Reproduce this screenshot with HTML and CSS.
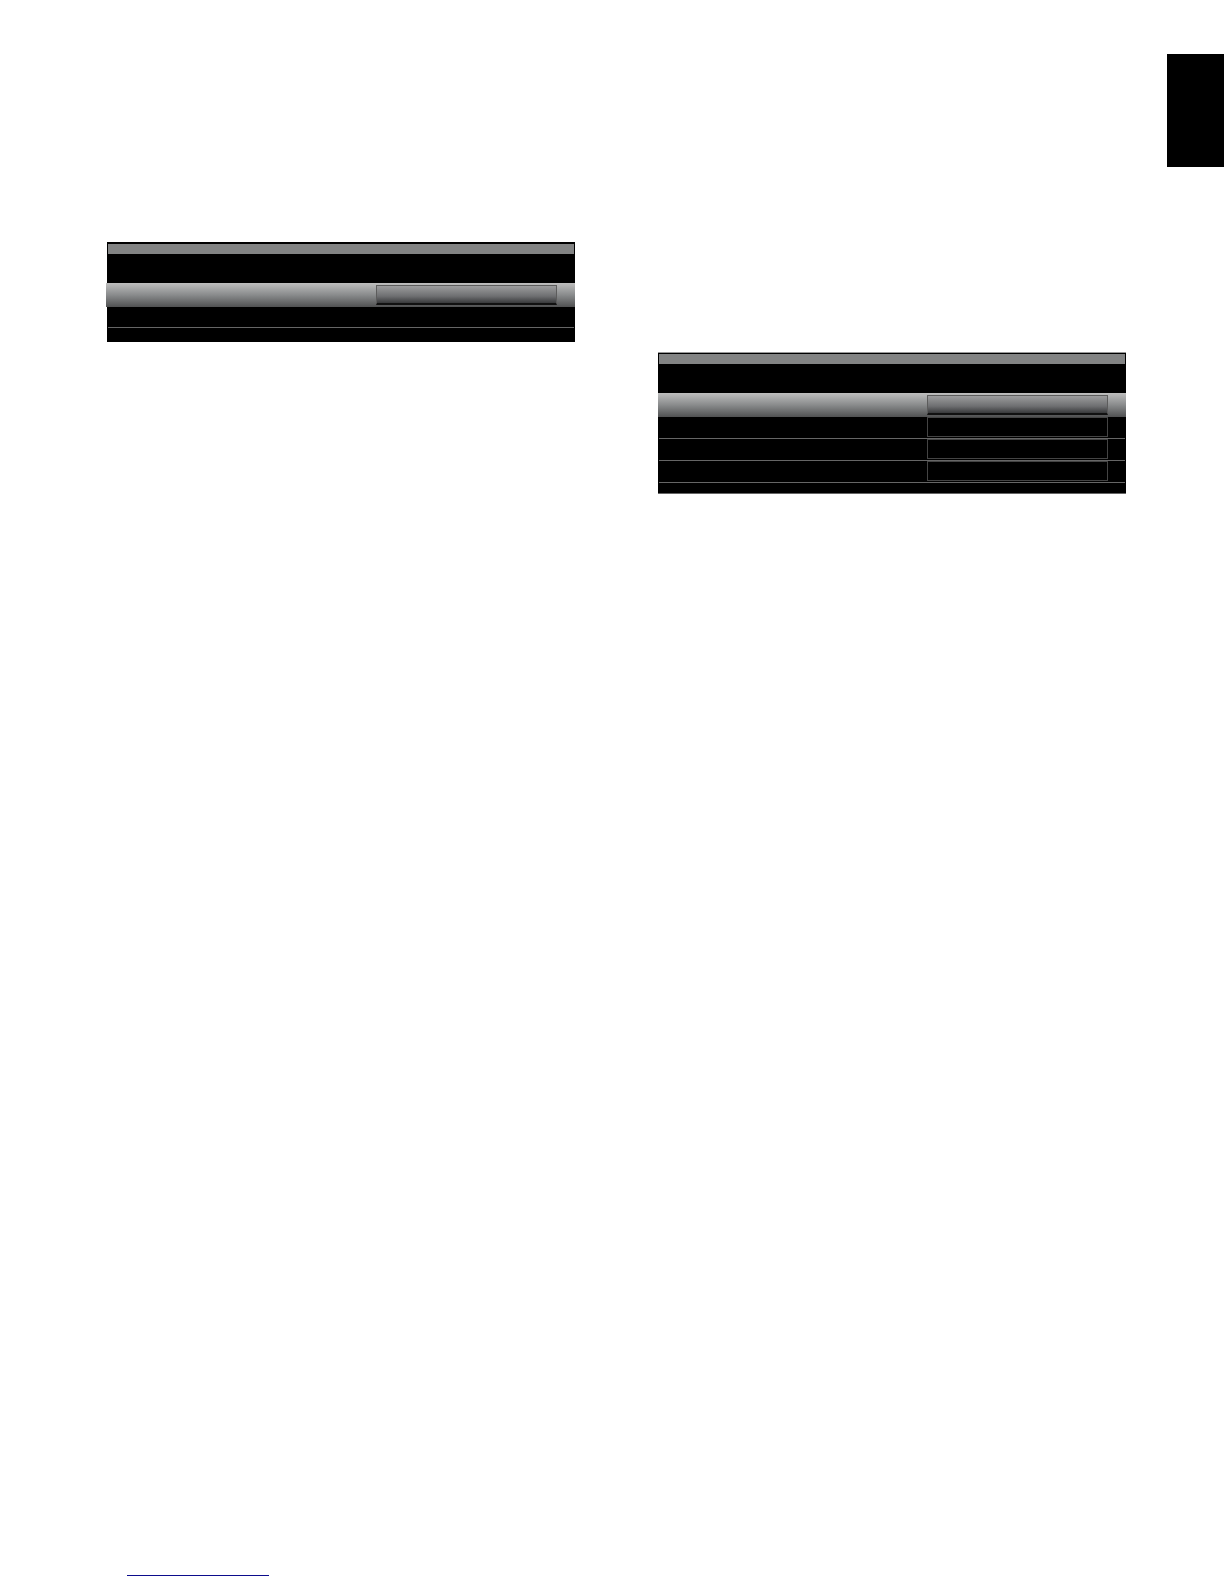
FILE: index.html
```
<!DOCTYPE html>
<html lang="en">
<head>
    <meta charset="UTF-8">
    <meta name="viewport" content="width=device-width, initial-scale=1.0">
    <title>Setup menus</title>
    <link rel="stylesheet" href="styles.css">
</head>
<body>
    <div class="top">
        <div class="tab"></div>
    </div>
    <div class="container">
        <div class="panel panel-left">
            <div class="title-bar"></div>
            <div class="heading"></div>
            <div class="row selected">
                <input class="field" type="text" aria-label="Value" readonly>
            </div>
            <div class="row"></div>
        </div>
        <div class="panel panel-right">
            <div class="title-bar"></div>
            <div class="heading"></div>
            <div class="row selected">
                <input class="field" type="text" aria-label="Value 1" readonly>
            </div>
            <div class="row">
                <input class="field" type="text" aria-label="Value 2" readonly>
            </div>
            <div class="row">
                <input class="field" type="text" aria-label="Value 3" readonly>
            </div>
            <div class="row">
                <input class="field" type="text" aria-label="Value 4" readonly>
            </div>
        </div>
    </div>
    <div class="footer">
        <a class="footer-link" href="#" aria-label="Contents"></a>
    </div>
</body>
</html>
```

FILE: styles.css
```
* {
    margin: 0;
    padding: 0;
    box-sizing: border-box;
}

body {
    display: flex;
    flex-direction: column;
    min-height: 100vh;
    background-color: #fff;
    font-family: "Liberation Sans", Arial, sans-serif;
}

.top {
    display: flex;
    justify-content: flex-end;
    padding-top: 54px;
}

.tab {
    width: 57px;
    height: 113px;
    background-color: #000;
}

.container {
    display: grid;
    grid-template-columns: 1fr 1fr;
    align-items: start;
    gap: 83px;
    padding: 75px 98px 0 107px;
}

.panel {
    padding-top: 1px;
    border-top: 1px solid #000;
    background-color: #000;
}

.panel-left {
    padding-bottom: 14px;
}

.panel-right {
    margin-top: 110px;
    padding-bottom: 10px;
    border-top-color: #999;
    border-bottom: 1px solid #666;
}

.title-bar {
    height: 10px;
    margin: 0 1px;
    background-color: #828383;
}

.heading {
    height: 29px;
}

.row {
    display: flex;
    justify-content: flex-end;
    height: 22px;
    margin: 0 1px;
    padding-right: 17px;
    border-bottom: 1px solid #666;
}

.panel-left .row {
    height: 21px;
}

.panel .selected {
    height: 24px;
    margin: 0;
    padding: 2px 18px 2px 0;
    border-bottom: 0;
    background: linear-gradient(#bebebe, #898b8c 50%, #505152);
}

.panel-left .selected {
    margin-left: -1px;
}

.field {
    width: 181px;
    height: 20px;
    border: 1px solid #444;
    background-color: #000;
}

.selected .field {
    border-color: #5c5c5c;
    border-bottom: 2px solid #111;
    background: linear-gradient(#9c9c9d, #6e6f71 60%, #38393b);
}

.footer {
    display: flex;
    margin-top: auto;
    padding: 0 0 8px 127px;
}

.footer-link {
    width: 142px;
    border-bottom: 1px solid #0c0c8c;
}
```
